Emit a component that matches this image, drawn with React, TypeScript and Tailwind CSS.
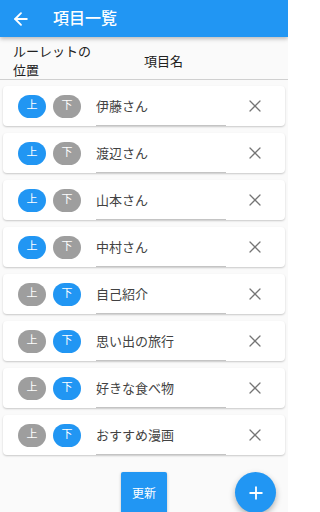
import { ArrowLeft, Plus, X } from "lucide-react"

type Item = { name: string; up: boolean }

const items: Item[] = [
  { name: "伊藤さん", up: true },
  { name: "渡辺さん", up: true },
  { name: "山本さん", up: true },
  { name: "中村さん", up: true },
  { name: "自己紹介", up: false },
  { name: "思い出の旅行", up: false },
  { name: "好きな食べ物", up: false },
  { name: "おすすめ漫画", up: false },
]

function Pill({ label, active }: { label: string; active: boolean }) {
  return (
    <span
      className={
        "flex h-[23px] w-[28px] items-center justify-center rounded-full text-[11px] text-white " +
        (active ? "bg-[#2196f3]" : "bg-[#9e9e9e]")
      }
    >
      {label}
    </span>
  )
}

export default function App() {
  return (
    <div
      className="relative h-[512px] w-[288px] overflow-hidden bg-[#fafafa]"
      style={{ fontFamily: 'Roboto, "Noto Sans CJK JP", sans-serif' }}
    >
      <header className="relative z-10 flex h-[37px] items-center bg-[#2196f3] text-white shadow-[0_2px_4px_rgba(0,0,0,0.25)]">
        <ArrowLeft className="ml-[11px] h-[20px] w-[20px]" strokeWidth={2.2} />
        <h1 className="ml-[22px] text-[16px] font-medium leading-none">項目一覧</h1>
      </header>

      <div className="flex h-[43px] items-center border-b border-[#d0d0d0] pt-[6px] text-[13px] leading-[19px] text-[#212121]">
        <div className="ml-[13px] w-[80px]">ルーレットの位置</div>
        <div className="ml-[51px]">項目名</div>
      </div>

      <ul className="flex flex-col gap-[7px] px-[3px] pt-[6px]">
        {items.map((item) => (
          <li
            key={item.name}
            className="flex h-[40px] items-center rounded-[4px] bg-white shadow-[0_1px_2px_rgba(0,0,0,0.2)]"
          >
            <div className="ml-[15px] flex gap-[7px]">
              <Pill label="上" active={item.up} />
              <Pill label="下" active={!item.up} />
            </div>
            <div className="ml-[15px] flex h-[33px] w-[130px] items-center self-end border-b border-[#c4c4c4] pb-[5px] text-[13px] text-[#424242]">
              {item.name}
            </div>
            <X className="ml-[19px] h-[20px] w-[20px] text-[#757575]" strokeWidth={1.5} />
          </li>
        ))}
      </ul>

      <div className="mt-[17px] flex">
        <button className="ml-[121px] flex h-[44px] w-[46px] items-center justify-center rounded-[2px] bg-[#2196f3] text-[12px] text-white shadow-[0_1px_3px_rgba(0,0,0,0.25)]">
          更新
        </button>
      </div>

      <button className="absolute left-[235px] top-[472px] flex h-[41px] w-[41px] items-center justify-center rounded-full bg-[#2196f3] text-white shadow-[0_3px_6px_rgba(0,0,0,0.3)]">
        <Plus className="h-[20px] w-[20px]" strokeWidth={2.2} />
      </button>
    </div>
  )
}
